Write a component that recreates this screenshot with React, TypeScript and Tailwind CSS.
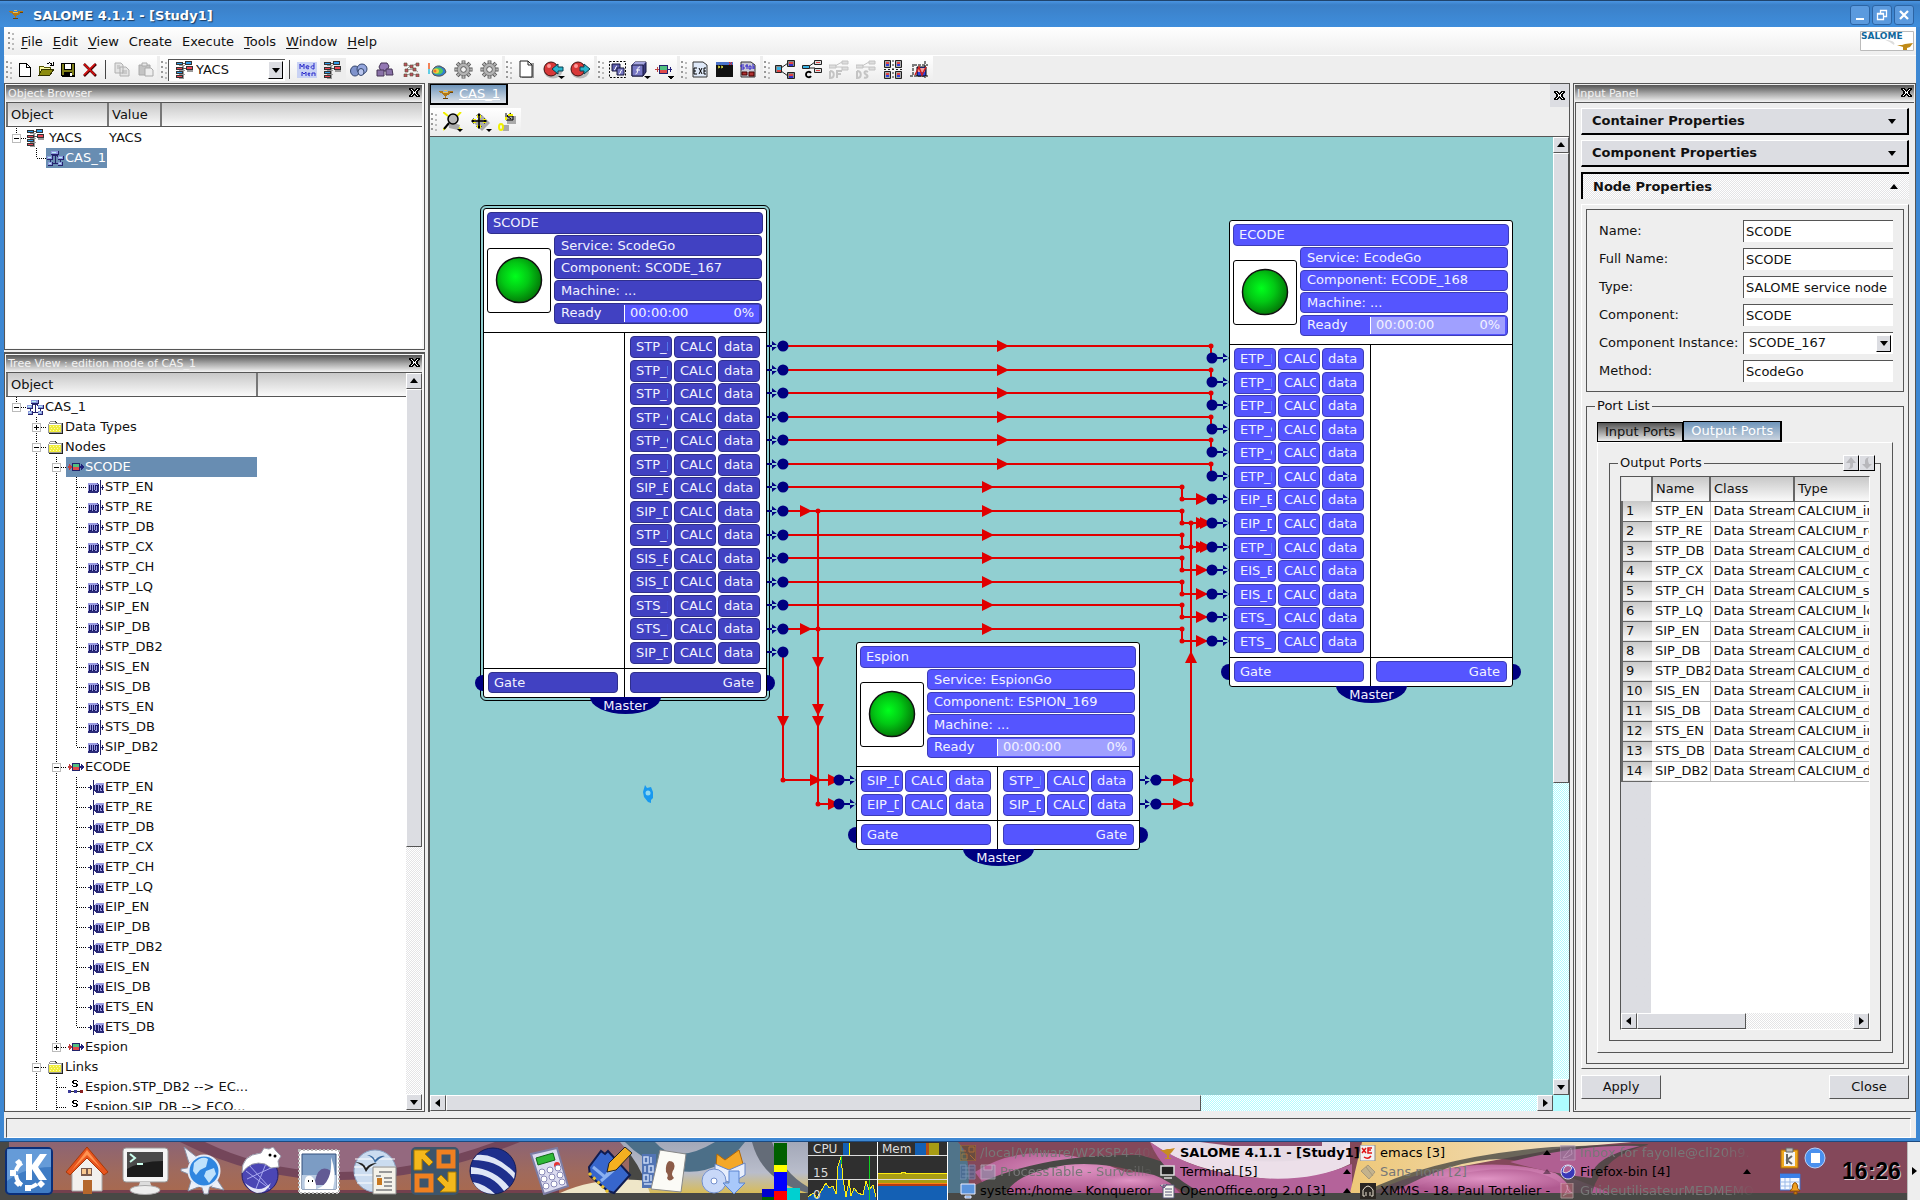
import React from "react";

type Kids = { children?: React.ReactNode };

/* ---------- small drawings ---------- */

const Lamp = () => (
  <svg width="16" height="12" viewBox="0 0 16 12" shapeRendering="crispEdges">
    <path d="M1 3h3l2 1h3l1-1h5v1l-3 1-2 2-2 1v2h2v1H5v-1h2V8L5 7 3 5 1 4z" fill="#b07818" />
    <path d="M6 2h3v1H6zM4 4h6v1H5z" fill="#f0c050" />
    <path d="M12 4h3v1h-3zM5 10h5v1H5z" fill="#6b4208" />
  </svg>
);

const YacsIcon = () => (
  <svg width="18" height="18" viewBox="0 0 18 18" shapeRendering="crispEdges">
    <path d="M3 4h6v1H3zM3 9h6v1H3zM3 13h6v1H3zM6 5h2v12H6zM11 9h6v2h-6zM3 17h5v1H3z" fill="#9a9a9a" />
    <path d="M0 1h7v3H0zM0 6h7v3H0zM0 10h7v3H0zM0 14h7v3H0zM9 0h7v4H9zM10 5h7v4h-7z" fill="#333" />
    <path d="M1 2h5v1H1zM10 1h5v2h-5zM1 11h5v1H1z" fill="#2d9be8" />
    <path d="M1 7h5v1H1zM1 15h5v1H1zM11 6h5v2h-5z" fill="#ee4455" />
    <path d="M7 2h2v1H7zM7 7h3v1H7z" fill="#555" />
  </svg>
);

const SchemaIcon = () => (
  <svg width="17" height="15" viewBox="0 0 17 15" shapeRendering="crispEdges">
    <path d="M8 4v8M3 6l5-2M13 6L8 4M3 9v3M13 9v3M5 12h7" stroke="#23236b" strokeWidth="1" fill="none" />
    <path d="M4 0h8v4H4zM0 5h6v4H0zM11 5h6v4h-6zM1 11h5v4H1zM11 11h5v4h-5z" fill="#23236b" />
    <path d="M4 0h7v3H4zM0 5h5v3H0zM11 5h5v3h-5zM1 11h4v3H1zM11 11h4v3h-4z" fill="#8f9be0" />
    <path d="M5 1h4v1H5zM1 6h3v1H1zM12 6h3v1h-3zM2 12h2v1H2zM12 12h2v1h-2z" fill="#b4f0f4" />
  </svg>
);

const FolderIcon = () => (
  <svg width="16" height="13" viewBox="0 0 16 13" shapeRendering="crispEdges">
    <path d="M1 3h1V1h1V0h5v1h1v1h6v11H1z" fill="#222" />
    <path d="M0 3h1V1h1V0h5v1h1v1h6v10H0z" fill="#999" />
    <path d="M1 4h12v7H1z" fill="#f1ee3a" />
    <path d="M2 5h1v1H2zM5 5h1v1H5zM8 5h1v1H8zM11 5h1v1h-1zM3 7h1v1H3zM6 7h1v1H6zM9 7h1v1H9zM2 9h1v1H2zM5 9h1v1H5zM8 9h1v1H8zM11 9h1v1h-1z" fill="#fffbb0" />
    <path d="M1 3h12v1H1zM2 1h5v1H2z" fill="#fff" />
  </svg>
);

const NodeIcon = () => (
  <svg width="16" height="8" viewBox="0 0 16 8" shapeRendering="crispEdges">
    <path d="M0 3h4v2H0zM1 1h1v6H1zM2 2h1v4H2z" fill="#c04040" />
    <path d="M12 3h4v2h-4zM13 1h1v6h-1zM14 2h1v4h-1z" fill="#20207a" />
    <path d="M4 0h8v8H4z" fill="#23236b" />
    <path d="M5 1h6v3H5z" fill="#4fc080" />
    <path d="M5 4h6v3H5z" fill="#e04a4a" />
  </svg>
);

const OutIcon = () => (
  <svg width="16" height="15" viewBox="0 0 16 15" shapeRendering="crispEdges">
    <path d="M0 3h9l2 2v6l-2 2H0z" fill="#2a2a78" />
    <path d="M0 3h9l1 2v5l-1 1H0z" fill="#9a9ae0" />
    <path d="M1 5h1v6H1zM3 5h1v6H3zM1 10h2v1H1zM5 5h1v5H5zM7 5h1v5H7zM5 10h2v1H5zM8 5h3v1H8zM9 6h1v5H9z" fill="#1a1a66" />
    <path d="M12 0h1v15h-1zM13 7h3v1h-3zM14 5h1v5h-1z" fill="#20206a" />
  </svg>
);

const InIcon = () => (
  <svg width="16" height="15" viewBox="0 0 16 15" shapeRendering="crispEdges">
    <path d="M8 3h8v10H8l-2-2V5z" fill="#2a2a78" />
    <path d="M8 3h8v8H8l-1-1V5z" fill="#9a9ae0" />
    <path d="M8 5h2v6H8zM11 5h1v6h-1zM12 6h1v2h-1zM13 8h1v2h-1zM14 5h1v6h-1z" fill="#1a1a66" />
    <path d="M5 0h1v15H5zM0 7h4v1H0zM2 5h1v5H2zM3 6h1v3H3z" fill="#20206a" />
  </svg>
);

const LinkIcon = () => (
  <svg width="16" height="14" viewBox="0 0 16 14" shapeRendering="crispEdges">
    <path d="M5 0h4v1H5zM4 1h2v2H4zM9 1h1v1H9zM5 3h4v1H5zM8 4h2v2H8zM4 5h1v1H4zM5 6h4v1H5z" fill="#000" />
    <path d="M2 11h12v1H2z" fill="#222" />
    <path d="M0 10h3v3H0zM6 10h3v3H6z" fill="#3a3a9a" />
    <path d="M12 10h3v3h-3z" fill="#8a2020" />
  </svg>
);

const CloseX = () => (
  <svg width="11" height="9" viewBox="0 0 11 9" shapeRendering="crispEdges">
    <path d="M0 0h4l1 2h1l1-2h4v1l-2 3v1l2 3v1H7L6 7H5L4 9H0V8l2-3V4L0 1z" fill="#000" />
    <path d="M2 1h1l2 3h1l2-3h1L7 4v1l2 3H8L6 5H5L3 8H2l2-3V4z" fill="#fff" />
  </svg>
);

const Tri = ({ dir }: { dir: "up" | "down" | "left" | "right" }) => {
  const d = {
    up: "M4 1l4 5H0z",
    down: "M0 2h8L4 7z",
    left: "M6 0v8L1 4z",
    right: "M2 0v8l5-4z",
  }[dir];
  return (
    <svg width="8" height="8" viewBox="0 0 8 8">
      <path d={d} fill="#000" />
    </svg>
  );
};

const Gear = () => (
  <svg width="19" height="19" viewBox="0 0 20 20">
    <g stroke="#555" strokeWidth="4">
      <path d="M10 .5v19M.5 10h19M3.300 3.300l13.400 13.400M16.700 3.300L3.300 16.700" />
    </g>
    <g stroke="#b4b4b4" strokeWidth="2.200">
      <path d="M10 1v18M1 10h18M3.600 3.600l12.800 12.800M16.400 3.600L3.600 16.400" />
    </g>
    <circle cx="10" cy="10" r="6.500" fill="#b4b4b4" stroke="#666" strokeWidth=".7" />
    <circle cx="10" cy="10" r="3" fill="#f0f0f0" stroke="#555" />
  </svg>
);

const Page = () => (
  <svg width="16" height="19" viewBox="0 0 16 19">
    <path d="M3 3h12v15H3z" fill="#999" />
    <path d="M1 1h8l4 4v12H1z" fill="#fff" stroke="#222" />
    <path d="M9 1v4h4" fill="none" stroke="#222" />
  </svg>
);

const Ball = ({ right }: { right?: boolean }) => (
  <svg width="22" height="19" viewBox="0 0 22 19">
    <ellipse cx="10" cy="12" rx="9" ry="6.500" fill="#b9b9b9" />
    <circle cx="8" cy="9" r="7" fill="#d83838" stroke="#401010" />
    <circle cx="6" cy="6" r="2" fill="#ff9a9a" />
    {right ? (
      <path d="M10 7h4V4l6 5-6 5v-3h-4z" fill="#28b4cc" stroke="#0a4050" />
    ) : (
      <path d="M20 7h-5V4L9 9l6 5v-3h5z" fill="#28b4cc" stroke="#0a4050" />
    )}
    {!right && <path d="M15 16h7l-3.500 3z" fill="#000" />}
  </svg>
);

const Cube = () => (
  <svg width="20" height="18" viewBox="0 0 20 18">
    <path d="M1 4l3-3h11v10l-3 4H1z" fill="#3a3a7c" stroke="#14143c" />
    <path d="M1 4l3-3h11l-3 3z" fill="#a8a8e0" />
    <path d="M1 4h11v11H1z" fill="#7878c4" stroke="#14143c" />
    <path d="M9 6c-2-.5-2 1-2.400 3.500S6 13 4.500 13M5 9h4" stroke="#fff" fill="none" />
    <path d="M13 15h7l-3.500 3z" fill="#000" />
  </svg>
);

const Graph = () => (
  <svg width="20" height="19" viewBox="0 0 20 19">
    <path d="M6 8l7-5M6 11l7 5" stroke="#222" fill="none" />
    <path d="M.5 5.500h6v7h-6zM12.500.500h7v6h-7zM12.500 12.500h7v6h-7z" fill="#888" stroke="#222" />
    <path d="M2 7h4v3H2z" fill="#38b0e0" />
    <path d="M14 2h4v2h-4zM2 10h4v2H2zM14 14h4v2h-4z" fill="#e04444" />
    <path d="M14 4h4v2h-4zM14 16h4v2h-4z" fill="#3333cc" />
  </svg>
);

const GraphWithC = () => (
  <svg width="20" height="19" viewBox="0 0 20 19">
    <path d="M6 7l7-5M7 8h6" stroke="#222" fill="none" />
    <path d="M.5 5.500h7v3h-7zM12.500.500h7v4h-7zM12.500 8.500h7v4h-7z" fill="#ddd" stroke="#222" />
    <path d="M1 6h6v2H1z" fill="#38b0e0" />
    <path d="M14 2h4v1h-4zM14 10h4v1h-4z" fill="#e04444" />
    <path d="M9 13c-1-2-5-1.500-5 1.500S8 18 9 16" stroke="#000" strokeWidth="1.800" fill="none" />
  </svg>
);

const GreyGraph = ({ s }: { s?: boolean }) => (
  <svg width="20" height="19" viewBox="0 0 20 19">
    <path d="M6 6l7-4M7 7h6M0 5h7v3H0zM13 1h6v3h-6zM13 7h6v3h-6z" stroke="#c4c4c4" fill="#ddd" />
    <path d="M1 11v7c5 0 5-7 0-7" stroke="#c4c4c4" strokeWidth="2" fill="none" />
    {s ? (
      <path d="M12 12c-3-2-5 1-2 2.500s1 4-2 3" stroke="#c4c4c4" strokeWidth="2" fill="none" />
    ) : (
      <path d="M8 18v-7h5M8 14h4" stroke="#c4c4c4" strokeWidth="2" fill="none" />
    )}
  </svg>
);

/* ---------- toolbar parts ---------- */

const Handle = () => (
  <span className="mx-px flex h-[18px] w-[6px] shrink-0 flex-col justify-between">
    {[0, 1, 2, 3].map((i) => (
      <span key={i} className="flex h-[3px] justify-between">
        <i className="h-[2px] w-[2px] bg-[#999]" />
        <i className="mt-px h-[2px] w-[2px] bg-[#bbb]" />
      </span>
    ))}
  </span>
);

const Group = ({ children }: Kids) => (
  <div className="mr-[3px] flex h-[27px] items-center bg-linear-to-b from-white to-[#ececec]">{children}</div>
);

const Tool = ({ label, w = "w-[26px]", on, children }: Kids & { label: string; w?: string; on?: boolean }) => (
  <button
    aria-label={label}
    title={label}
    className={`flex h-[24px] shrink-0 items-center justify-center ${w} ${on ? "bg-[#ededed]" : ""}`}
  >
    {children}
  </button>
);

const Sep = () => <span className="mx-[4px] h-[19px] w-px shrink-0 bg-[#444]" />;

const MainToolbar = () => (
  <div className="flex h-[28px] items-start border-t border-white bg-[#eee] pl-px">
    <Group>
      <Handle />
      <Tool label="New" w="w-[22px]">
        <svg width="13" height="15" viewBox="0 0 13 15" shapeRendering="crispEdges">
          <path d="M1 1h7l4 4v9H1z" fill="#fff" stroke="#000" />
          <path d="M8 1v4h4" fill="none" stroke="#000" />
        </svg>
      </Tool>
      <Tool label="Open" w="w-[22px]">
        <svg width="17" height="15" viewBox="0 0 17 15" shapeRendering="crispEdges">
          <path d="M1 13V4h4l1 1h6v3" fill="#f8f8a0" stroke="#555500" />
          <path d="M1 13l3-6h12l-4 6z" fill="#8c8c10" stroke="#333300" />
          <path d="M9 2c2-2 4-1 5 1M12 3h3V0" stroke="#000" fill="none" />
        </svg>
      </Tool>
      <Tool label="Save" w="w-[22px]">
        <svg width="14" height="14" viewBox="0 0 14 14" shapeRendering="crispEdges">
          <path d="M0 0h14v14H1l-1-1z" fill="#000" />
          <path d="M1 1h2v6h8V1h2v11H1z" fill="#80801a" />
          <path d="M4 1h6v5H4z" fill="#fff" />
          <path d="M3 9h8v5H3z" fill="#000" />
          <path d="M9 10h2v3H9z" fill="#fff" />
        </svg>
      </Tool>
      <Tool label="Delete" w="w-[22px]">
        <svg width="14" height="14" viewBox="0 0 14 14">
          <path d="M1 1l12 12M13 1L1 13" stroke="#400" strokeWidth="2.500" />
          <path d="M1 1l11 11M12 1L1 12" stroke="#d81010" strokeWidth="1.700" />
        </svg>
      </Tool>
      <Sep />
      <Tool label="Copy" w="w-[24px]">
        <svg width="16" height="15" viewBox="0 0 16 15">
          <path d="M1 1h6l2 2v8H1zM6 5h6l3 3v6H6z" fill="#e4e4e4" stroke="#b0b0b0" />
          <path d="M3 4h3M3 6h3M8 9h5M8 11h5" stroke="#b0b0b0" />
        </svg>
      </Tool>
      <Tool label="Paste" w="w-[23px]">
        <svg width="16" height="15" viewBox="0 0 16 15">
          <path d="M1 3h11v10H1z" fill="#c4c4c4" stroke="#aaa" />
          <path d="M4 1h5v3H4z" fill="#e8e8e8" stroke="#aaa" />
          <path d="M7 6h6l2 2v6H7z" fill="#eee" stroke="#aaa" />
        </svg>
      </Tool>
    </Group>
    <Group>
      <Handle />
      <div className="relative flex h-[22px] w-[117px] items-center border-t border-l border-[#555] bg-white">
        <span className="pointer-events-none absolute left-[7px]">
          <YacsIcon />
        </span>
        <select aria-label="Module" className="h-full w-full appearance-none bg-transparent pl-[27px] text-[13px]">
          <option>YACS</option>
        </select>
        <span className="pointer-events-none absolute right-[2px] flex h-[18px] w-[15px] items-center justify-center border border-t-white border-r-black border-b-black border-l-white bg-[#dcdde2]">
          <Tri dir="down" />
        </span>
      </div>
      <Sep />
      <Tool label="MedMem">
        <svg width="20" height="16" viewBox="0 0 20 16">
          <path d="M0 0h20v16H0z" fill="#c9d2f4" />
          <path d="M3 7V2l2 3 2-3v5M9 5h3c0-2-3-2-3 0s2 2 3 1.500M17 1v6c-4 0-4-4 0-3" stroke="#2a2acb" fill="none" />
          <path d="M5 14v-4l2 2 2-2v4M11 12h2c0-1.500-2-1.500-2 0s1 2 2 1.500M15 14v-3h3v3" stroke="#2a2acb" fill="none" />
        </svg>
      </Tool>
      <Tool label="YACS" on>
        <YacsIcon />
      </Tool>
      <Tool label="Post">
        <svg width="18" height="14" viewBox="0 0 18 14">
          <ellipse cx="5" cy="8" rx="4.500" ry="5" fill="#7f93cc" stroke="#34466e" />
          <ellipse cx="12" cy="6" rx="5" ry="5" fill="#94a6dd" stroke="#34466e" />
          <ellipse cx="11" cy="9" rx="3" ry="3.500" fill="#b9c6ee" stroke="#34466e" />
        </svg>
      </Tool>
      <Tool label="Geometry">
        <svg width="18" height="15" viewBox="0 0 18 15">
          <path d="M5 1h6l2 3-2 5H5L3 5z" fill="#9478b4" stroke="#443355" />
          <path d="M1 8h7v6H1zM10 7h6l1 6h-7z" fill="#8a72a8" stroke="#443355" />
        </svg>
      </Tool>
      <Tool label="Mesh">
        <svg width="17" height="15" viewBox="0 0 17 15">
          <path d="M2 2l5 2 7-2M3 8l8-1 4 3M2 13l6-1 6 1M7 4L3 8" stroke="#999" fill="none" />
          <path d="M1 1h3v3H1zM7 3h3v3H7zM13 1h3v3h-3zM2 7h3v3H2zM10 6h3v3h-3zM1 12h3v3H1zM7 11h3v3H7zM13 12h3v3h-3z" fill="#c05060" stroke="#553" strokeWidth=".6" />
        </svg>
      </Tool>
      <Tool label="Visualisation">
        <svg width="19" height="14" viewBox="0 0 19 14">
          <path d="M1 0v6" stroke="#f05a20" strokeWidth="1.500" />
          <path d="M1 6v5" stroke="#30c0e0" strokeWidth="1.500" />
          <path d="M4 9q2-7 8-6 6 2 6 6-3 5-9 4-4 0-5-4z" fill="#2f7fd0" stroke="#555" />
          <ellipse cx="10" cy="8" rx="5" ry="3.500" fill="#52c860" />
          <ellipse cx="8" cy="8" rx="3" ry="2.500" fill="#f0d040" />
          <ellipse cx="7" cy="8" rx="1.500" ry="1.500" fill="#f07030" />
        </svg>
      </Tool>
      <Tool label="Supervisor">
        <Gear />
      </Tool>
      <Tool label="Supervision">
        <Gear />
      </Tool>
    </Group>
    <Group>
      <Handle />
      <Tool label="New schema" w="w-[27px]">
        <Page />
      </Tool>
      <Tool label="Import" w="w-[27px]">
        <Ball />
      </Tool>
      <Tool label="Export" w="w-[27px]">
        <Ball right />
      </Tool>
    </Group>
    <Group>
      <Handle />
      <Tool label="Container" w="w-[24px]">
        <svg width="17" height="17" viewBox="0 0 17 17">
          <path d="M.5.5h16v16H.5z" fill="none" stroke="#000" strokeDasharray="2 1.500" />
          <path d="M3 3h8v7H3z" fill="#5c5cac" stroke="#14143c" />
          <path d="M8 7h7v7H8z" fill="#7878c4" stroke="#14143c" />
          <path d="M8 5c-2 0-1 4-3 4M13 9c-2 0-1 4-3 4" stroke="#fff" fill="none" />
        </svg>
      </Tool>
      <Tool label="Function" w="w-[24px]">
        <Cube />
      </Tool>
      <Tool label="Service" w="w-[24px]">
        <svg width="20" height="18" viewBox="0 0 20 18" shapeRendering="crispEdges">
          <path d="M0 8h4v1H0zM2 6h1v5H2z" fill="#c04040" />
          <path d="M4 4h9v9H4z" fill="#23236b" />
          <path d="M5 5h7v4H5z" fill="#4fc080" />
          <path d="M5 9h7v3H5z" fill="#e04a4a" />
          <path d="M13 8h4v1h-4zM15 6h1v5h-1z" fill="#20207a" />
          <path d="M12 15h7l-3 3h-1z" fill="#000" />
        </svg>
      </Tool>
    </Group>
    <Group>
      <Handle />
      <Tool label="Execute" w="w-[24px]">
        <svg width="16" height="17" viewBox="0 0 16 17">
          <path d="M1 1h10l4 3v12H1z" fill="#dfe9f8" stroke="#333" />
          <path d="M2 7v6M2 7h3M2 10h2M2 13h3M7 7l3 6M10 7l-3 6M14 7h-2v6h2M12 10h2" stroke="#000" fill="none" />
        </svg>
      </Tool>
      <Tool label="Console" w="w-[24px]">
        <svg width="17" height="15" viewBox="0 0 17 15">
          <path d="M0 0h17v15H0z" fill="#111" />
          <path d="M0 0h17v3H0z" fill="#4a72c8" />
          <path d="M13 0l3 3M16 0l-3 3" stroke="#e02020" />
          <path d="M2 4l2 1-2 1M5 4l2 1-2 1" stroke="#ee4" fill="none" />
        </svg>
      </Tool>
      <Tool label="State" w="w-[24px]">
        <svg width="16" height="17" viewBox="0 0 16 17">
          <path d="M1 1h10l4 3v12H1z" fill="#c9c9d4" stroke="#333" />
          <path d="M4 4H1v2h3v2H1M7 3v5M5 5h3M11 5v3H9V5zM13 3v5M14 5v3" stroke="#3322cc" fill="none" />
          <path d="M2 11h5v3H2zM9 11h5v4H9z" fill="#b03030" stroke="#400" />
        </svg>
      </Tool>
    </Group>
    <Group>
      <Handle />
      <Tool label="Full view" w="w-[27px]">
        <Graph />
      </Tool>
      <Tool label="Control view" w="w-[27px]">
        <GraphWithC />
      </Tool>
      <Tool label="Dataflow view" w="w-[27px]">
        <GreyGraph />
      </Tool>
      <Tool label="Datastream view" w="w-[27px]">
        <GreyGraph s />
      </Tool>
      <Tool label="Arrange nodes" w="w-[27px]">
        <svg width="18" height="19" viewBox="0 0 18 19">
          <path d="M.5.5h6v7h-6zM11.500.500h6v7h-6zM.5 11.500h6v7h-6zM11.500 11.500h6v7h-6z" fill="#aaa" stroke="#222" />
          <path d="M2 4h3v2H2zM13 4h3v2h-3zM2 15h3v2H2zM13 15h3v2h-3z" fill="#3344dd" />
          <path d="M2 2h3v2H2zM13 2h3v2h-3zM13 13h3v2h-3zM2 13h3v2H2z" fill="#e04444" />
          <path d="M9 0v19M0 9.500h18" stroke="#222" strokeDasharray="2 2" />
        </svg>
      </Tool>
      <Tool label="Rebuild links" w="w-[27px]">
        <svg width="19" height="18" viewBox="0 0 19 18">
          <path d="M4 4h14M3 3v11M0 15h18M15 0v17" stroke="#000" strokeDasharray="3 1" fill="none" />
          <path d="M7 6h9v9H7z" fill="#3344dd" stroke="#000" />
          <path d="M8 7h7v4H8z" fill="#f0a0a0" />
          <path d="M5 14l4-8 3 8 4-8" stroke="#d02020" strokeWidth="1.500" fill="none" />
        </svg>
      </Tool>
    </Group>
  </div>
);

/* ---------- dock parts ---------- */

const DockTitle = ({ children }: Kids) => (
  <div className="flex h-[17px] shrink-0 items-center justify-between bg-linear-to-b from-[#555] via-[#a8a8a8] to-[#f4f4f4] pr-[2px] pl-[2px] text-[11px] text-[#f2f2f2]">
    <span>{children}</span>
    <button aria-label="Close panel" className="mb-[2px]">
      <CloseX />
    </button>
  </div>
);

const HeaderCell = ({ w, children }: Kids & { w: string }) => (
  <div
    className={`flex h-[23px] items-center border-l-2 border-[#777] bg-linear-to-b from-[#c8c8c8] to-[#fafafa] pl-[3px] ${w}`}
  >
    {children}
  </div>
);

const VDots = "bg-[repeating-linear-gradient(to_bottom,#000_0_1px,transparent_1px_2px)]";
const HDots = "bg-[repeating-linear-gradient(to_right,#000_0_1px,transparent_1px_2px)]";

/* Guide cells: | line, T tee, L elbow, + and - toggles, p and m toggles that end a branch, o empty. */
const Guide = ({ c }: { c: string }) => {
  if (c === "o") return <span className="w-[20px] shrink-0" />;
  const toggle = "+-pm".includes(c);
  const down = "|T+-".includes(c);
  return (
    <span className="grid h-[20px] w-[20px] shrink-0 grid-cols-[11px_9px] grid-rows-[10px_10px]">
      <span className={`col-start-1 row-start-1 ml-auto w-px ${VDots}`} />
      <span className={`col-start-1 row-start-2 ml-auto w-px ${down ? VDots : ""}`} />
      {c !== "|" && <span className={`col-start-2 row-start-2 h-px ${HDots}`} />}
      {toggle && (
        <span className="z-10 col-span-2 col-start-1 row-span-2 row-start-1 ml-[6px] flex h-[9px] w-[9px] items-center justify-center self-center border border-[#bbb] bg-white">
          <svg width="5" height="5" viewBox="0 0 5 5" shapeRendering="crispEdges">
            <path d={c === "+" || c === "p" ? "M0 2h5v1H0zM2 0h1v5H2z" : "M0 2h5v1H0z"} fill="#000" />
          </svg>
        </span>
      )}
    </span>
  );
};

const TreeRow = ({ guides, icon, selected, children }: Kids & { guides: string; icon: React.ReactNode; selected?: boolean }) => (
  <div className="flex h-[20px] shrink-0 items-center" role="treeitem" aria-selected={!!selected}>
    {guides.split("").map((c, i) => (
      <Guide key={i} c={c} />
    ))}
    <span
      className={`flex h-[20px] flex-1 items-center whitespace-nowrap ${selected ? "bg-[#688db2] text-white" : ""}`}
    >
      <span className="flex w-[19px] shrink-0 justify-center">{icon}</span>
      {children}
    </span>
  </div>
);

const ScrollBtn = ({ dir }: { dir: "up" | "down" | "left" | "right" }) => (
  <button
    aria-label={`Scroll ${dir}`}
    className="flex h-[16px] w-[16px] shrink-0 items-center justify-center border border-t-white border-r-[#555] border-b-[#555] border-l-white bg-[#dcdde2]"
  >
    <Tri dir={dir} />
  </button>
);

const Thumb = ({ size }: { size: string }) => (
  <span className={`border border-t-white border-r-[#555] border-b-[#555] border-l-white bg-[#dcdde2] ${size}`} />
);

const dither = "bg-[length:2px_2px] bg-[conic-gradient(#fff_25%,#e4e4e6_0_50%,#fff_0_75%,#e4e4e6_0)]";
const cyanDither = "bg-[length:2px_2px] bg-[conic-gradient(#fff_25%,#b0fbff_0_50%,#fff_0_75%,#b0fbff_0)]";

const outPorts = [
  "STP_EN", "STP_RE", "STP_DB", "STP_CX", "STP_CH", "STP_LQ", "SIP_EN", "SIP_DB",
  "STP_DB2", "SIS_EN", "SIS_DB", "STS_EN", "STS_DB", "SIP_DB2",
];
const inPorts = [
  "ETP_EN", "ETP_RE", "ETP_DB", "ETP_CX", "ETP_CH", "ETP_LQ", "EIP_EN", "EIP_DB",
  "ETP_DB2", "EIS_EN", "EIS_DB", "ETS_EN", "ETS_DB",
];
const portTypes = [
  "integer", "real", "double", "complex", "string", "logical", "integer", "double",
  "double", "integer", "double", "integer", "double", "double",
];

const LeftDock = () => (
  <aside className="flex w-[421px] shrink-0 flex-col">
    <section className="flex h-[267px] shrink-0 flex-col border border-[#555] bg-[#f8f8f8] p-px pr-[2px]">
      <DockTitle>Object Browser</DockTitle>
      <div className="flex min-h-0 flex-1 flex-col bg-white">
        <div className="flex border-y border-[#555] bg-linear-to-b from-[#c8c8c8] to-[#fafafa]">
          <HeaderCell w="w-[101px]">Object</HeaderCell>
          <HeaderCell w="w-[53px]">Value</HeaderCell>
          <HeaderCell w="flex-1" />
        </div>
        <div className="flex flex-col pt-px" role="tree" aria-label="Objects">
          <div className="flex h-[20px] items-center">
            <div className="w-[103px]">
              <TreeRow guides="m" icon={<YacsIcon />}>
                <span className="pl-[4px]">YACS</span>
              </TreeRow>
            </div>
            YACS
          </div>
          <div className="w-[101px]">
            <TreeRow guides="oL" icon={<SchemaIcon />} selected>
              CAS_1
            </TreeRow>
          </div>
        </div>
      </div>
    </section>
    <section className="mt-[2px] flex min-h-0 flex-1 flex-col border border-t-2 border-[#555] bg-[#f8f8f8] p-px pr-[2px]">
      <DockTitle>Tree View : edition mode of CAS_1</DockTitle>
      <div className="flex min-h-0 flex-1 border-t border-[#555] bg-white">
        <div className="flex min-w-0 flex-1 flex-col">
          <div className="flex shrink-0 border-b border-[#555]">
            <HeaderCell w="w-[250px]">Object</HeaderCell>
            <HeaderCell w="flex-1" />
          </div>
          <div className="flex min-h-0 w-[251px] flex-1 flex-col overflow-hidden" role="tree" aria-label="Schema">
            <TreeRow guides="m" icon={<SchemaIcon />}>CAS_1</TreeRow>
            <TreeRow guides="o+" icon={<FolderIcon />}>Data Types</TreeRow>
            <TreeRow guides="o-" icon={<FolderIcon />}>Nodes</TreeRow>
            <TreeRow guides="o|-" icon={<NodeIcon />} selected>SCODE</TreeRow>
            {outPorts.map((p, i) => (
              <TreeRow key={p} guides={i === outPorts.length - 1 ? "o||L" : "o||T"} icon={<OutIcon />}>{p}</TreeRow>
            ))}
            <TreeRow guides="o|-" icon={<NodeIcon />}>ECODE</TreeRow>
            {inPorts.map((p, i) => (
              <TreeRow key={p} guides={i === inPorts.length - 1 ? "o||L" : "o||T"} icon={<InIcon />}>{p}</TreeRow>
            ))}
            <TreeRow guides="o|p" icon={<NodeIcon />}>Espion</TreeRow>
            <TreeRow guides="o-" icon={<FolderIcon />}>Links</TreeRow>
            <TreeRow guides="o|T" icon={<LinkIcon />}>Espion.STP_DB2 --&gt; EC...</TreeRow>
            <TreeRow guides="o|T" icon={<LinkIcon />}>Espion.SIP_DB --&gt; ECO...</TreeRow>
          </div>
        </div>
        <div className={`flex w-[16px] flex-col ${dither}`}>
          <ScrollBtn dir="up" />
          <Thumb size="h-[458px]" />
          <span className="flex-1" />
          <ScrollBtn dir="down" />
        </div>
      </div>
    </section>
  </aside>
);

/* ---------- schema nodes ---------- */

type NodeProps = {
  name: string;
  service: string;
  component: string;
  place: string;
  portsHeight: string;
  left: string[];
  right: string[];
  selected?: boolean;
};

const LampBox = () => (
  <span className="mt-[13px] flex h-[65px] w-[64px] shrink-0 items-center justify-center rounded-[3px] border border-black">
    <svg width="48" height="50" viewBox="0 0 48 50">
      <defs>
        <radialGradient id="led" cx="42%" cy="42%" r="60%">
          <stop offset="0" stopColor="#00ff1c" />
          <stop offset=".5" stopColor="#02c814" />
          <stop offset="1" stopColor="#037808" />
        </radialGradient>
      </defs>
      <circle cx="24" cy="24" r="22.500" fill="url(#led)" stroke="#111" strokeWidth="1.500" />
    </svg>
  </span>
);

const SchemaNode = ({ name, service, component, place, portsHeight, left, right, selected }: NodeProps) => {
  const pill = selected ? "bg-[#4141c2] border-[#2f2f8c]" : "bg-[#5555ff] border-[#3d3db8]";
  const bar = selected ? "bg-[#5555ff]" : "bg-[#a0a0ff]";
  const Pill = ({ children, cls }: Kids & { cls: string }) => (
    <span className={`flex items-center rounded-[4px] border ${pill} ${cls}`}>{children}</span>
  );
  const port = (label: string, i: number) => (
    <span key={i} className="flex gap-[2px]">
      {[label, "CALC", "data"].map((t) => (
        <span key={t} className={`flex h-[22px] w-[42px] items-center rounded-[4px] border pr-[3px] pl-[5px] ${pill}`}>
          <span className="w-full overflow-hidden whitespace-nowrap">{t}</span>
        </span>
      ))}
    </span>
  );
  return (
    <article
      className={`absolute flex w-[284px] flex-col rounded-[3px] border border-black bg-white text-[#f2f2ff] ${place} ${
        selected ? "outline outline-1 outline-offset-[2px] outline-black" : ""
      }`}
    >
      <div className="flex h-[123px] flex-col px-[3px] pt-[3px]">
        <Pill cls="h-[22px] pl-[5px]">{name}</Pill>
        <div className="mt-px flex gap-[3px]">
          <LampBox />
          <div className="flex h-[89px] flex-1 flex-col justify-between pr-px">
            <Pill cls="h-[21px] pl-[6px]">Service: {service}</Pill>
            <Pill cls="h-[21px] pl-[6px]">Component: {component}</Pill>
            <Pill cls="h-[21px] pl-[6px]">Machine: ...</Pill>
            <Pill cls="h-[21px] pl-[6px]">
              <span className="w-[63px]">Ready</span>
              <span className={`mr-[2px] flex h-[17px] flex-1 items-center justify-between border-l border-white px-[5px] ${bar}`}>
                <span>00:00:00</span>
                <span>0%</span>
              </span>
            </Pill>
          </div>
        </div>
      </div>
      <div className={`flex border-t border-black ${portsHeight}`}>
        <div className="flex w-[140px] flex-col justify-between pt-[3px] pb-[4px] pl-[4px]">{left.map(port)}</div>
        <div className="flex flex-1 flex-col justify-between border-l border-black pt-[3px] pb-[4px] pl-[5px]">
          {right.map(port)}
        </div>
      </div>
      <div className="flex h-[29px] border-t border-black">
        <div className="w-[140px] pt-[3px] pr-[6px] pl-[4px]">
          <Pill cls="h-[21px] pl-[5px]">Gate</Pill>
        </div>
        <div className="flex-1 border-l border-black pt-[3px] pr-[5px] pl-[5px]">
          <Pill cls="h-[21px] justify-end pr-[6px]">Gate</Pill>
        </div>
      </div>
      <span className="absolute bottom-[6px] -left-[9px] h-[16px] w-[8px] rounded-l-full bg-[#000080]" />
      <span className="absolute -right-[9px] bottom-[6px] h-[16px] w-[8px] rounded-r-full bg-[#000080]" />
      <span className="absolute top-full left-[106px] flex h-[17px] w-[71px] items-center justify-center rounded-[0_0_50%_50%/0_0_100%_100%] bg-[#000080]">
        Master
      </span>
    </article>
  );
};

const RED = "#e00000";
const NAVY = "#000080";
const sy = (n: number) => Math.round(346 + 23.57 * n);
const ey = (n: number) => Math.round(358 + 23.57 * n);

const Arrow = ({ x, y, dir = "r" }: { x: number; y: number; dir?: "r" | "d" | "u" }) => {
  const d = {
    r: `M${x} ${y - 6}v12l12-6z`,
    d: `M${x - 6} ${y}h12l-6 12z`,
    u: `M${x - 6} ${y}h12l-6-12z`,
  }[dir];
  return <path d={d} fill={RED} />;
};

const OutDot = ({ x, y }: { x: number; y: number }) => (
  <g fill={NAVY}>
    <path d={`M${x - 16} ${y - 1}h14v2h-14zM${x - 11} ${y - 5}v10l6-5z`} />
    <circle cx={x} cy={y} r="5.500" />
  </g>
);

const InDot = ({ x, y }: { x: number; y: number }) => (
  <g fill={NAVY}>
    <path d={`M${x} ${y - 1}h16v2h-16zM${x + 11} ${y - 5}v10l6-5z`} />
    <circle cx={x} cy={y} r="5.500" />
  </g>
);

const Links = () => (
  <svg className="absolute inset-0 h-full w-full" aria-label="Links">
    <g transform="translate(-430 -137)">
      <g stroke={RED} strokeWidth="2" fill="none">
        {inPorts.map((p, n) => (
          <path key={p} d={n < 6 ? `M783 ${sy(n)}H1211V${ey(n)}` : `M783 ${sy(n)}H1182V${ey(n)}H1212`} />
        ))}
        <path d={`M783 ${sy(13)}V780H839`} />
        <path d={`M818 ${sy(7)}V804H839`} />
        <path d="M1156 780H1191M1156 804H1191V523H1212" />
      </g>
      <g fill={RED}>
        {inPorts.map((p, n) => (
          <React.Fragment key={p}>
            <circle cx={n < 6 ? 1211 : 1182} cy={sy(n)} r="2.500" />
            {n >= 6 && <circle cx="1182" cy={ey(n)} r="2.500" />}
            <Arrow x={n < 6 ? 997 : 982} y={sy(n)} />
            {n >= 6 && <Arrow x={1196} y={ey(n)} />}
          </React.Fragment>
        ))}
        {[[783, 780], [818, 804], [818, 511], [818, 629], [1191, 780], [1191, 804], [1191, 523], [1191, 547]].map(([x, y]) => (
          <circle key={`${x}-${y}`} cx={x} cy={y} r="2.500" />
        ))}
      </g>
      <Arrow x={1200} y={ey(7)} />
      <Arrow x={1200} y={ey(8)} />
      <Arrow x={800} y={sy(7)} />
      <Arrow x={800} y={sy(12)} />
      <Arrow x={783} y={716} dir="d" />
      <Arrow x={818} y={657} dir="d" />
      <Arrow x={818} y={704} dir="d" />
      <Arrow x={818} y={716} dir="d" />
      <Arrow x={810} y={780} />
      <Arrow x={828} y={780} />
      <Arrow x={828} y={804} />
      <Arrow x={1173} y={780} />
      <Arrow x={1173} y={804} />
      <Arrow x={1191} y={663} dir="u" />
      {outPorts.map((p, n) => (
        <OutDot key={p} x={783} y={sy(n)} />
      ))}
      {inPorts.map((p, n) => (
        <InDot key={p} x={1212} y={ey(n)} />
      ))}
      <InDot x={839} y={780} />
      <InDot x={839} y={804} />
      <OutDot x={1156} y={780} />
      <OutDot x={1156} y={804} />
      <path d="M645 785l2 3 4-1 2 5v6l-2 2v3l-3-1-4-5-1-5z" fill="#1899f0" />
      <circle cx="648" cy="793" r="2.500" fill="#91d8f0" />
    </g>
  </svg>
);

const Workspace = () => (
  <main className="ml-[3px] flex min-w-0 flex-1 flex-col border-t border-r border-l-2 border-t-[#555] border-r-[#555] border-l-[#555]">
    <div className="flex h-[24px] items-start justify-between">
      <button className="flex h-[21px] w-[78px] items-center gap-[5px] border-r-2 border-b-2 border-t border-l border-black bg-linear-to-b from-[#6f95ba] to-[#dfe4ea] pl-[7px] text-white underline">
        <Lamp />
        CAS_1
      </button>
      <button aria-label="Close tab" className="flex h-[23px] w-[19px] items-center justify-center bg-[#dcdde2]">
        <CloseX />
      </button>
    </div>
    <div className="flex h-[28px]">
      <Group>
        <Handle />
        <Tool label="Zoom" w="w-[29px]">
          <svg width="20" height="20" viewBox="0 0 20 20">
            <path d="M0 0l5 4M18 0l-4 4M0 18l3-3M14 14l4 4" stroke="#f0f000" strokeWidth="2" />
            <path d="M5 9l12 4-2 5-9-2z" fill="#aaa" />
            <circle cx="10" cy="7" r="5" fill="#b8b8b8" stroke="#000" strokeWidth="1.500" />
            <path d="M6 11l-5 6" stroke="#000" strokeWidth="2" />
            <path d="M14 17h6l-3 3z" />
          </svg>
        </Tool>
        <Tool label="Pan" w="w-[28px]">
          <svg width="22" height="20" viewBox="0 0 22 20">
            <path d="M12 3l8 8-8 8-8-8z" fill="#aaa" />
            <path d="M9 2v14M2 9h14" stroke="#000" strokeWidth="1.500" />
            <path d="M9 1l3 3H6zM9 17l3-3H6zM1 9l3-3v6zM17 9l-3-3v6z" fill="#000" />
            <path d="M7 3h1v3H7zM10 3h1v3h-1zM3 7h3v1H3zM13 7h3v1h-3zM3 10h3v1H3zM13 10h3v1h-3zM7 13h1v3H7zM10 13h1v3h-1z" fill="#f0f000" />
            <path d="M16 17h6l-3 3z" />
          </svg>
        </Tool>
        <Tool label="Reset view" w="w-[26px]">
          <svg width="20" height="20" viewBox="0 0 20 20">
            <path d="M9 4h9v8H9zM5 13h6v6H5z" fill="#aaa" />
            <path d="M8 1v7h7V4H9M13 1l-4 3 4 3" stroke="#000" fill="none" />
            <path d="M10 2h5v2h-5zM7 5h2v3H7z" fill="#f0f000" />
            <ellipse cx="3" cy="15" rx="2" ry="3" stroke="#f0f000" strokeWidth="2" fill="none" />
          </svg>
        </Tool>
      </Group>
    </div>
    <div className="flex min-h-0 flex-1 border-t border-[#555]">
      <div className="relative min-w-0 flex-1 overflow-hidden bg-[#91cfd1]">
        <SchemaNode name="SCODE" service="ScodeGo" component="SCODE_167" place="left-[53px] top-[71px]" portsHeight="h-[336px]" left={[]} right={outPorts} selected />
        <SchemaNode name="ECODE" service="EcodeGo" component="ECODE_168" place="left-[799px] top-[83px]" portsHeight="h-[313px]" left={inPorts} right={[]} />
        <SchemaNode name="Espion" service="EspionGo" component="ESPION_169" place="left-[426px] top-[505px]" portsHeight="h-[54px]" left={["SIP_DB", "EIP_DB"]} right={["STP_DB2", "SIP_DB"]} />
        <Links />
      </div>
      <div className={`flex w-[16px] flex-col ${cyanDither}`}>
        <ScrollBtn dir="up" />
        <Thumb size="h-[630px]" />
        <span className="flex-1" />
        <ScrollBtn dir="down" />
      </div>
    </div>
    <div className={`mb-px flex h-[16px] shrink-0 ${cyanDither}`}>
      <ScrollBtn dir="left" />
      <Thumb size="w-[755px]" />
      <span className="flex-1" />
      <ScrollBtn dir="right" />
      <span className="w-[16px] bg-[#aefcff]" />
    </div>
  </main>
);

/* ---------- input panel ---------- */

const Accordion = ({ open, children }: Kids & { open?: boolean }) => (
  <button
    aria-expanded={!!open}
    className={`flex h-[27px] items-center justify-between pr-[11px] pl-[10px] font-bold ${
      open
        ? `border-t-2 border-l-2 border-black ${dither}`
        : "border border-t-white border-r-2 border-r-black border-b-2 border-b-black border-l-white bg-[#dcdde2]"
    }`}
  >
    {children}
    <Tri dir={open ? "up" : "down"} />
  </button>
);

const fields = [
  ["Name:", "SCODE"],
  ["Full Name:", "SCODE"],
  ["Type:", "SALOME service node"],
  ["Component:", "SCODE"],
  ["Component Instance:", "SCODE_167"],
  ["Method:", "ScodeGo"],
];

const PortTable = () => (
  <div className="flex min-h-0 flex-1 flex-col border border-t-[#555] border-r-white border-b-white border-l-[#555] bg-white">
    <div className="min-h-0 flex-1 overflow-hidden bg-linear-to-r from-[#dcdde2] from-[30px] to-white to-[30px]">
      <table className="w-full table-fixed border-collapse text-left">
        <colgroup>
          <col className="w-[30px]" />
          <col className="w-[58px]" />
          <col className="w-[84px]" />
          <col />
        </colgroup>
        <thead>
          <tr className="h-[24px]">
            <th className="bg-[#eee]" />
            {["Name", "Class", "Type"].map((h) => (
              <th key={h} className="border-b border-l-2 border-[#666] bg-linear-to-b from-[#c8c8c8] to-[#fafafa] pl-[3px] font-normal">
                {h}
              </th>
            ))}
          </tr>
        </thead>
        <tbody>
          {outPorts.map((p, i) => (
            <tr key={p} className="h-[20px]">
              <th className="border-b border-l-2 border-[#666] bg-linear-to-b from-[#c8c8c8] to-[#fafafa] pl-[3px] font-normal">
                {i + 1}
              </th>
              <td className="overflow-hidden border-r border-b border-[#bbb] bg-white pl-[3px] whitespace-nowrap">{p}</td>
              <td className="overflow-hidden border-r border-b border-[#bbb] bg-white pl-[3px] whitespace-nowrap">Data Stream</td>
              <td className="overflow-hidden border-b border-[#bbb] bg-white pl-[3px] whitespace-nowrap">CALCIUM_{portTypes[i]}</td>
            </tr>
          ))}
        </tbody>
      </table>
    </div>
    <div className={`flex h-[16px] shrink-0 ${dither}`}>
      <ScrollBtn dir="left" />
      <Thumb size="w-[109px]" />
      <span className="flex-1" />
      <ScrollBtn dir="right" />
    </div>
  </div>
);

const UpDown = ({ d, label }: { d: string; label: string }) => (
  <button
    aria-label={label}
    disabled
    className="flex h-[16px] w-[16px] items-center justify-center border border-t-white border-r-black border-b-black border-l-white bg-[#dcdde2]"
  >
    <svg width="12" height="12" viewBox="0 0 12 12">
      <path d={d} fill="#b8b8bc" />
    </svg>
  </button>
);

const InputPanel = () => (
  <aside className="ml-[3px] flex w-[343px] shrink-0 flex-col border border-[#555] p-px pt-px">
    <DockTitle>Input Panel</DockTitle>
    <div className="flex min-h-0 flex-1 flex-col gap-[5px] border-t border-l border-[#555] px-[5px] pt-[5px] pb-[11px]">
      <Accordion>Container Properties</Accordion>
      <Accordion>Component Properties</Accordion>
      <Accordion open>Node Properties</Accordion>
      <div className="flex min-h-0 flex-1 flex-col border border-t-white border-r-[#555] border-b-[#555] border-l-white p-[4px]">
        <div className="flex shrink-0 flex-col gap-[5px] border border-[#555] py-[9px] pr-[10px] pl-[12px]">
          {fields.map(([label, value]) => {
            const id = label.replace(/\W/g, "");
            return (
              <div key={label} className="flex h-[23px] items-center">
                <label htmlFor={id} className="w-[144px] shrink-0">
                  {label}
                </label>
                {label === "Component Instance:" ? (
                  <div className="relative flex h-[22px] min-w-0 flex-1 items-center border-t border-l border-[#555] bg-white">
                    <select id={id} className="h-full w-full appearance-none pl-[5px]">
                      <option>{value}</option>
                    </select>
                    <span className="pointer-events-none absolute right-[2px] flex h-[17px] w-[15px] items-center justify-center border border-t-white border-r-black border-b-black border-l-white bg-[#dcdde2]">
                      <Tri dir="down" />
                    </span>
                  </div>
                ) : (
                  <input
                    id={id}
                    defaultValue={value}
                    className="h-[22px] min-w-0 flex-1 border-t border-l border-[#555] bg-white pl-[2px]"
                  />
                )}
              </div>
            );
          })}
        </div>
        <fieldset className="mt-[6px] flex min-h-0 min-w-0 flex-1 flex-col border border-[#555] px-[10px] pt-[7px] pb-[10px]">
          <legend className="-ml-[2px] px-[2px]">Port List</legend>
          <div className="flex shrink-0 items-end" role="tablist">
            <button role="tab" aria-selected="false" className="h-[20px] border border-black bg-linear-to-b from-[#555] to-[#f0f0f0] px-[7px]">
              Input Ports
            </button>
            <button role="tab" aria-selected="true" className="h-[21px] border-t border-r-2 border-b-2 border-l border-black bg-linear-to-b from-[#6f95ba] to-[#c9d3de] px-[7px] text-white">
              Output Ports
            </button>
          </div>
          <div className="relative flex min-h-0 flex-1 flex-col border border-t-white border-r-[#555] border-b-[#555] border-l-white px-[11px] pt-[12px] pb-[11px]">
            <fieldset className="flex min-h-0 min-w-0 flex-1 flex-col border border-[#555] px-[10px] pt-[5px] pb-[10px]">
              <legend className="-ml-[2px] px-[2px]">Output Ports</legend>
              <PortTable />
            </fieldset>
            <div className="absolute top-[12px] right-[17px] flex">
              <UpDown label="Move up" d="M6 0l5 6H8v3q0 3-5 3 3-2 2-6H1z" />
              <UpDown label="Move down" d="M6 12L1 7h3V4q0-3 4-4-2 2 0 7h3z" />
            </div>
          </div>
        </fieldset>
      </div>
      <div className="mt-px flex shrink-0 justify-between">
        {["Apply", "Close"].map((t) => (
          <button key={t} className="h-[24px] w-[80px] border border-t-white border-r-[#555] border-b-[#555] border-l-white bg-[#dcdde2]">
            {t}
          </button>
        ))}
      </div>
    </div>
  </aside>
);

/* ---------- desktop panel ---------- */

const Backdrop = () => (
  <svg className="absolute inset-0 h-full w-full" viewBox="0 0 1920 58" preserveAspectRatio="none">
    <defs>
      <linearGradient id="dusk" x1="0" y1="0" x2="0" y2="1">
        <stop offset="0" stopColor="#8c6474" />
        <stop offset=".6" stopColor="#a06a5c" />
        <stop offset="1" stopColor="#a8694e" />
      </linearGradient>
      <linearGradient id="steel" x1="0" y1="0" x2="0" y2="1">
        <stop offset="0" stopColor="#a3a8b8" />
        <stop offset=".6" stopColor="#b9bdcb" />
        <stop offset="1" stopColor="#d8bc58" />
      </linearGradient>
      <linearGradient id="cream" x1="0" y1="0" x2="1" y2="0">
        <stop offset="0" stopColor="#eec878" />
        <stop offset="1" stopColor="#f0e4d4" />
      </linearGradient>
      <radialGradient id="pink" cx="50%" cy="40%" r="55%">
        <stop offset="0" stopColor="#e094c4" />
        <stop offset="1" stopColor="#b05a90" />
      </radialGradient>
    </defs>
    <path d="M0 0h1920v58H0z" fill="#484845" />
    <path d="M9 0h620v51H9z" fill="url(#dusk)" />
    <path d="M9 48h550v3H9z" fill="#74404e" />
    <path d="M180 0q150 76 340 0z" fill="#74465a" />
    <path d="M205 0q125 60 290 0z" fill="#94697f" />
    <path d="M560 51q40-18 90-12v12z" fill="#efe6c8" />
    <path d="M620 0h188v51H650q-10-30-30-51z" fill="url(#steel)" />
    <path d="M625 0h30q20 24 60 0h30q-30 40-80 26-25-10-40-26z" fill="#4c6f88" />
    <path d="M752 0h20q10 30 36 45v6q-46-12-56-51z" fill="#646c78" />
    <path d="M948 0h959v51H948z" fill="#84485a" />
    <path d="M948 0h10q14 14 10 51h-20z" fill="#50748a" />
    <path d="M975 30q60-40 160 4 20 10 40 17H990z" fill="url(#pink)" />
    <path d="M960 51q70-40 180-38 60 16 70 38h-24q-60-34-120-28-50 8-60 28z" fill="#484845" />
    <path d="M1080 51q50-36 90-10l10 10z" fill="url(#pink)" />
    <path d="M1150 0h200v22q-40 20-90 14-70-6-110-36z" fill="#ecdfe9" />
    <path d="M1150 0q50 34 110 36 50 4 92-14v29h-150q-40-20-52-51z" fill="#b4639a" />
    <path d="M1180 0q60 30 150 14l20-14z" fill="#e6dae4" />
    <path d="M1200 0h122v4h-90z" fill="#8c4f70" />
    <path d="M1350 51l12-51h270l-70 6-120 22-74 23z" fill="url(#cream)" />
    <path d="M1370 51q110-50 210-12l30 12z" fill="url(#pink)" />
    <path d="M1362 51q70-36 190-46l80-3h20q-50 10-60 49h-20q-10-30-70-34-50 0-110 34z" fill="#484845" opacity=".8" />
    <path d="M1510 20q70-18 130-16-50 12-48 32-40-4-82-16z" fill="#b05f92" />
    <path d="M1400 51q70-30 130-22 30 6 40 22z" fill="url(#pink)" />
    <path d="M1650 0h257v51h-240q-40-30-17-51z" fill="#84485a" />
  </svg>
);

const Launcher = ({ label, w = "w-[58px]", children }: Kids & { label: string; w?: string }) => (
  <button aria-label={label} className={`flex h-full shrink-0 items-center justify-center ${w}`}>
    <svg width="48" height="48" viewBox="0 0 48 48">
      {children}
    </svg>
  </button>
);

const Launchers = () => (
  <div className="relative flex h-full shrink-0">
    <Launcher label="K Menu">
      <rect x="1" y="1" width="46" height="46" rx="4" fill="#3f7cc4" stroke="#0a2f7a" strokeWidth="2" />
      <path d="M2 2h44v18Q20 20 2 34z" fill="#7fb0e6" opacity=".6" />
      <path d="M17 16q-5 3-6 8M11 28q1 7 6 10M21 40q6 1 11-3" fill="none" stroke="#fff" strokeWidth="4" />
      <path d="M10 15l4-3 3 3-4 4zM5 23h6v6H5zM9 36l4-4 4 4-4 4zM20 38h6v6h-6zM32 37l4-4 4 4-4 4z" fill="#fff" />
      <path d="M21 7h6v11l8-11h7l-9 13 9 13h-8l-7-11v11h-6z" fill="#fff" />
    </Launcher>
    <Launcher label="Home">
      <path d="M9 22L24 8l15 14v22H9z" fill="#f2f0ee" stroke="#aaa" />
      <path d="M24 0l21 25-4 3L24 11 7 28l-4-3z" fill="#e8551e" stroke="#a83808" />
      <path d="M24 3l14 18-14-13-15 15z" fill="#ff9350" />
      <path d="M20 33h9v14h-9z" fill="#b5672c" />
      <path d="M18 21h11v8H18z" fill="#7a5a4c" />
      <path d="M19 22h4v5h-4zM25 22h3v5h-3z" fill="#f8c890" />
    </Launcher>
    <Launcher label="Terminal">
      <rect x="2" y="1" width="45" height="34" rx="3" fill="#f4f4f4" stroke="#999" />
      <path d="M6 5h36v25H6z" fill="#1c1c1c" />
      <path d="M6 5h36v9Q20 14 6 22z" fill="#4a4a4a" />
      <path d="M9 7l5 4-5 4M16 17h6" stroke="#cfe" strokeWidth="2" fill="none" />
      <path d="M19 35h10l2 6H17z" fill="#ddd" />
      <ellipse cx="24" cy="43" rx="15" ry="4.500" fill="#eee" stroke="#aaa" />
    </Launcher>
    <Launcher label="Konqueror">
      <path d="M5 0l14 11-9 5zM2 22l12-2v9L2 24zM41 20l-6 2 2-9zM12 34l-3 10 13-5zM45 43l-13-3 5-9zM22 38h9l-2 9h-4z" fill="#eef0f6" stroke="#8890a4" />
      <circle cx="25" cy="24" r="15.500" fill="#2f86e0" stroke="#e4ecf8" strokeWidth="2" />
      <path d="M15 16q8-8 14-4l-2 8-6 3-4 5-3-4zM27 24l8-3 2 6-7 9-5-7z" fill="#bfe2fc" />
    </Launcher>
    <Launcher label="Browser">
      <circle cx="23" cy="28" r="18" fill="#4b46b4" stroke="#25206e" />
      <path d="M12 18l20 22M10 32l26-12M18 44l12-30M9 24l24 18" stroke="#a8a8f0" fill="none" />
      <path d="M5 26Q4 8 24 6l3-5 5 1 4-2 3 4 5 5-3 5 1 6-8 1-6-4Q14 13 5 26z" fill="#fff" stroke="#99a" />
      <circle cx="33" cy="8" r="1.500" />
      <circle cx="38" cy="9" r="1.500" />
      <path d="M8 36q14 12 26 0-4 10-14 10-8-2-12-10z" fill="#e6e6f6" />
    </Launcher>
    <Launcher label="Mail">
      <path d="M4 3h40v43H4z" fill="#fff" stroke="#bbb" strokeDasharray="2 2" strokeWidth="2" />
      <path d="M7 7h34v35H7z" fill="#7c9cc4" stroke="#34507c" />
      <path d="M7 28h34v14H7z" fill="#b9cbe2" />
      <path d="M20 34q4-18 16-10v14H20z" fill="#625a94" />
      <path d="M10 42q-2-15 6-13 6 4 5 13zM22 42q16-6 14-32 6 16 2 32z" fill="#fff" />
      <path d="M13 33h1v2h-1zM17 33h1v2h-1z" />
    </Launcher>
    <Launcher label="Office">
      <circle cx="22" cy="24" r="21" fill="#cbdcf0" stroke="#8ba3c4" />
      <path d="M2 12h40M1 20h42M1 28h42M4 36h36" stroke="#fff" />
      <path d="M14 8q6 0 8 5 5-5 10-4-6 2-10 7-2-6-8-8z" fill="#3a6aa0" />
      <path d="M2 15q9 0 11 6 4-5 11-5-8 3-11 9-3-8-11-10z" fill="#222" />
      <path d="M20 20h23v27H20z" fill="#f4f2ea" stroke="#888" />
      <path d="M26 25h13M23 29h5M31 31h8M31 35h8M31 39h8M23 43h16" stroke="#999" strokeWidth="2" />
      <path d="M24 31h5v7h-5z" fill="#c87820" />
    </Launcher>
    <Launcher label="Virtual machine">
      <rect x="0" y="0" width="48" height="48" rx="5" fill="#3c556c" />
      <path d="M3 3h16l-5 4 8 8-4 4-7-7v11H3zM45 45H29l5-5-8-8 4-4 7 7V25h8z" fill="#f4b81c" stroke="#a87800" />
      <rect x="28" y="5" width="14" height="14" fill="none" stroke="#f08020" strokeWidth="5" />
      <rect x="6" y="29" width="14" height="14" fill="none" stroke="#f08020" strokeWidth="5" />
    </Launcher>
    <Launcher label="Earth">
      <circle cx="24" cy="24" r="23" fill="#1e2f8c" stroke="#101c5c" />
      <path d="M8 8Q26 6 46 26l-1 6Q30 13 4 13zM2 20q24 2 38 20l-5 4Q22 26 2 27zM4 35q12 2 22 12-16 0-22-12z" fill="#dfe6f6" />
    </Launcher>
    <Launcher label="Calculator">
      <path d="M4 7L30 1l11 38-24 8z" fill="#dcdcf0" stroke="#7c7ca4" strokeWidth="2" />
      <path d="M9 11l17-5 2 7-17 5z" fill="#30b838" stroke="#106818" />
      <circle cx="30" cy="18" r="3" fill="#e83030" />
      <g fill="#fff" stroke="#8a8ab8">
        {[0, 1, 2].map((r) => [0, 1, 2].map((c) => (
          <circle key={`${r}${c}`} cx={15 + c * 8 + r * 2} cy={25 + r * 7 - c * 2} r="3" />
        )))}
      </g>
    </Launcher>
    <Launcher label="Notes">
      <path d="M4 20L16 4l4 3 3-3 22 24-16 18-6-2-18-15z" fill="#3766cc" stroke="#101c50" strokeWidth="2" />
      <path d="M8 20l12 10 10-14M16 34l16-14" stroke="#8ab0f0" strokeWidth="3" fill="none" />
      <path d="M24 16L40 0l7 6-16 17-9 2z" fill="#f4b020" stroke="#222" />
      <path d="M4 26l20 20" stroke="#e8c030" strokeWidth="3" strokeDasharray="3 3" />
    </Launcher>
    <Launcher label="Scripts" w="w-[54px]">
      <path d="M1 7h14v34H1z" fill="#5274b4" />
      <path d="M3 10h4v6H3zM10 10v6M4 19v6M8 19h4v6H8zM3 28h4v6H3zM10 28v6M3 37h9" stroke="#c8d8f4" fill="none" strokeWidth="1.500" />
      <path d="M19 3l26 4-5 38-30-3z" fill="#fbfbf6" stroke="#888" />
      <path d="M28 14q7 0 5 8-4 5 0 9-5 5-7 0 2-3-1-6-1-8 3-11z" fill="#8c5c48" />
    </Launcher>
    <Launcher label="Software" w="w-[66px]">
      <path d="M16 7l8 6 14-10 4 14-12 9-15-7z" fill="#f4a828" stroke="#b06808" />
      <path d="M14 17l14 6 16-7v12q-8 6-16 7-10-2-14-8z" fill="#e8eefc" stroke="#6484c8" />
      <circle cx="13" cy="34" r="12" fill="#c8d8f8" stroke="#7490cc" />
      <circle cx="13" cy="34" r="3" fill="#fff" stroke="#7490cc" />
      <path d="M28 24h10v12h6L33 47 22 36h6z" fill="#a8c8fa" stroke="#5a84d0" />
    </Launcher>
  </div>
);

const Monitors = () => (
  <div className="relative flex h-full shrink-0 pl-[2px] text-[12px] text-[#ddd]">
    <svg width="48" height="58" viewBox="0 0 48 58" shapeRendering="crispEdges">
      <path d="M14 1h13v22H14z" fill="#006000" />
      <path d="M14 23h13v7H14z" fill="#ffff00" />
      <path d="M14 30h13v19H14z" fill="#0000ff" />
      <path d="M14 49h13v9H14z" fill="#ff0000" />
      <path d="M2 47h12v8H2z" fill="#0000cc" />
      <path d="M2 55h12v3H2z" fill="#006000" />
      <path d="M27 46h13v12H27z" fill="#00d0d0" />
    </svg>
    <div className="flex w-[70px] flex-col border-r border-white bg-[#2f2f2f]">
      <div className="flex h-[14px] items-center gap-[6px] border-b border-[#ddd] pl-[5px]">
        CPU
        <span className="h-[12px] w-[7px] border-r border-[#ff0] bg-[#1460b4]" />
      </div>
      <svg width="69" height="44" viewBox="0 0 69 44" shapeRendering="crispEdges">
        <path d="M0 41l5-4 4 5 4-7 5-8 3 5 4-2 3 8 2-28 3-9 2 22 3 18 3-17 2 16 3-8 4 5 5 2 3-14 3 9 4-5 3 12v4H0z" fill="#1460b4" />
        <path d="M0 41l5-4 4 5 4-7 5-8 3 5 4-2 3 8 2-28 3-9 2 22 3 18 3-17 2 16 3-8 4 5 5 2 3-14 3 9 4-5 3 12" fill="none" stroke="#ffee10" />
        <path d="M61 0v44M33 0v8" stroke="#10d020" />
        <path d="M0 23h69" stroke="#ddd" />
        <text x="5" y="21" fontSize="12" fill="#ddd">15</text>
        <text x="5" y="43" fontSize="12" fill="#ddd">0</text>
      </svg>
    </div>
    <div className="flex w-[70px] flex-col border-r border-white bg-[#2f2f2f]">
      <div className="flex h-[14px] items-center gap-[4px] border-b border-[#ddd] pl-[4px]">
        Mem
        <span className="flex h-[12px] w-[24px]">
          <i className="w-[11px] bg-[#1460b4]" />
          <i className="w-[3px] bg-[#b45014]" />
          <i className="flex-1 bg-[#a89c14]" />
        </span>
      </div>
      <svg width="69" height="44" viewBox="0 0 69 44" shapeRendering="crispEdges">
        <path d="M0 17h23v-1h4v1h42v11H0z" fill="#a89c14" />
        <path d="M0 17h23v-1h4v1h42" stroke="#ffee10" fill="none" />
        <path d="M0 27h69v3H0z" fill="#ff8010" />
        <path d="M0 29h69v15H0z" fill="#1460b4" />
        <path d="M0 23h69" stroke="#ddd" />
        <path d="M0 29h69" stroke="#b43c14" strokeWidth="2" />
      </svg>
    </div>
  </div>
);

const taskIcon: Record<string, React.ReactNode> = {
  vm: <path d="M0 0h16v16H0zM1 1v5h5M9 2h5v5H9zM2 9h5v5H2zM10 10l5 5" fill="#5a5030" stroke="#c88020" />,
  grid: <path d="M0 1h6v14H0zM9 1h6v14H9zM2 4h12M2 8h12M2 12h12" fill="#4a6a9a" stroke="#8aa4cc" />,
  disk: <path d="M1 1h14v14H1zM4 1v5h8V1" fill="#8a94a8" stroke="#c8ccd8" />,
  home: <path d="M1 1h14v10H1zM5 13h6v2H5z" fill="#5a94dc" stroke="#eef" />,
  lamp: <path d="M0 5h4l3-1h3l5-1-3 4-3 3v3h2v1H5v-1h2v-3L3 7z" fill="#c88c20" />,
  term: <path d="M1 2h13v9H1zM4 14h8" fill="#222" stroke="#ddd" strokeWidth="1.500" />,
  office: <path d="M3 2h11v13H3zM5 6h7M5 9h7M5 12h7M0 2l4 3 3-4" fill="#f4f4ee" stroke="#557" />,
  emacs: (
    <g>
      <path d="M0 0h15v16H0z" fill="#f2f2f2" stroke="#888" />
      <path d="M2 3l4 5M6 3L2 8M12 3H8v5h4M8 5h3M4 12q4 3 7-1" stroke="#e01818" strokeWidth="1.500" fill="none" />
    </g>
  ),
  pen: <path d="M1 7l7-6 7 7-6 7zM6 3l7 9" fill="#a8a498" stroke="#777" />,
  xmms: (
    <g>
      <path d="M0 0h16v16H0z" fill="#2a2622" />
      <path d="M5 13H3V7q5-8 10 0v6h-2M6 9v4M10 9v4" stroke="#e8e0d0" fill="none" />
    </g>
  ),
  feather: <path d="M0 0h15v15H0zM3 13l8-10 1 6-5 3z" fill="#8f7898" stroke="#c0b0c8" />,
  fox: <path d="M8 1a7 7 0 1 0 .1 0zM4 4q4-5 8 0l-2 3-4 2-3-1z" fill="#3838b8" stroke="#dde" />,
  pdf: <path d="M1 0h12v15H1zM3 13q6-6 4-11 0 7 6 8-6-1-10 3z" fill="#b06870" stroke="#ddc0c0" />,
};

type Task = { icons: string[]; text: string; more?: boolean; dim?: boolean; bold?: boolean };
const tasks: Task[][] = [
  [
    { icons: ["vm"], text: "/local/VMware/W2KSP4-40G", dim: true },
    { icons: ["grid", "disk"], text: "ProcessTable - Surveilla", dim: true },
    { icons: ["home"], text: "system:/home - Konqueror" },
  ],
  [
    { icons: ["lamp"], text: "SALOME 4.1.1 - [Study1]", bold: true },
    { icons: ["term"], text: "Terminal [5]", more: true },
    { icons: ["office"], text: "OpenOffice.org 2.0 [3]", more: true },
  ],
  [
    { icons: ["emacs"], text: "emacs [3]", more: true },
    { icons: ["pen"], text: "Sans nom [2]", dim: true, more: true },
    { icons: ["xmms"], text: "XMMS - 18. Paul Tortelier -" },
  ],
  [
    { icons: ["feather"], text: "Inbox for fayolle@cli20h9.", dim: true },
    { icons: ["fox"], text: "Firefox-bin [4]", more: true },
    { icons: ["pdf"], text: "GuideutilisateurMEDMEMO", dim: true },
  ],
];

const TaskList = () => (
  <div className="relative grid min-w-0 flex-1 grid-cols-4 pl-[12px]">
    {tasks.map((col, i) => (
      <div key={i} className="flex min-w-0 flex-col pt-px">
        {col.map((t) => (
          <button
            key={t.text}
            className={`flex h-[19px] items-center gap-[4px] overflow-hidden whitespace-nowrap ${
              t.bold ? "font-bold" : ""
            } ${t.dim ? "text-[#777]" : "text-black"}`}
          >
            {t.icons.map((k) => (
              <svg key={k} width="16" height="16" viewBox="0 0 16 16" className={`shrink-0 ${t.dim ? "opacity-60" : ""}`}>
                {taskIcon[k]}
              </svg>
            ))}
            <span
              className={`flex-1 overflow-hidden text-left ${
                t.dim && !t.more ? "mr-[4px] [mask-image:linear-gradient(to_right,#000_80%,transparent)]" : ""
              }`}
            >
              {t.text}
            </span>
            {t.more && (
              <span className={`mr-[9px] ${t.dim ? "opacity-40" : ""}`}>
                <Tri dir="up" />
              </span>
            )}
          </button>
        ))}
      </div>
    ))}
  </div>
);

const Tray = () => (
  <div className="relative flex h-full w-[160px] shrink-0">
    <div className="grid w-[70px] grid-cols-[24px_24px] content-center gap-y-[4px] pl-[20px]">
      <svg width="20" height="22" viewBox="0 0 20 22">
        <path d="M1 3h17v18H1z" fill="#f0a820" stroke="#a86808" />
        <path d="M4 5h11v14H4z" fill="#f4f4f4" />
        <path d="M6 1h7v4H6z" fill="#bbb" stroke="#666" />
        <path d="M7 7v10M12 9l-5 4 5 4" stroke="#666" strokeWidth="2" fill="none" />
      </svg>
      <svg width="22" height="22" viewBox="0 0 22 22">
        <circle cx="11" cy="11" r="10" fill="#4a90ee" stroke="#b8d0f8" />
        <path d="M7 6h9v10H7z" fill="#fff" />
      </svg>
      <svg width="22" height="22" viewBox="0 0 22 22">
        <path d="M0 1h20v16H0z" fill="#f4f8ff" stroke="#3a70d0" />
        <path d="M0 1h20v4H0z" fill="#3a80e8" />
        <path d="M5 5v12M10 5v12M0 9h20M0 13h20" stroke="#9ab8e8" />
        <path d="M10 18q3-2 3-7 2-3 4 0 0 5 3 7zM14 19h3v2h-3z" fill="#f0a020" stroke="#904c00" />
      </svg>
    </div>
    <time className="flex flex-1 items-center justify-center pl-[6px] font-['Liberation_Sans',sans-serif] text-[23px] font-bold text-black [text-shadow:1px_1px_0_#d8c8cc]">
      16:26
    </time>
    <button aria-label="Hide panel" className="flex w-[13px] items-center justify-center border-l border-[#bbb] bg-[#eee]">
      <Tri dir="right" />
    </button>
  </div>
);

/* ---------- window ---------- */

const menus: [string, boolean][] = [
  ["File", true], ["Edit", true], ["View", true], ["Create", false],
  ["Execute", false], ["Tools", true], ["Window", true], ["Help", true],
];

const WinBtn = ({ label, children }: Kids & { label: string }) => (
  <button aria-label={label} className="flex h-[20px] w-[20px] items-center justify-center rounded-[3px] border border-[#2c64a4] bg-[#5b9ade]">
    <svg width="12" height="12" viewBox="0 0 12 12" fill="none" stroke="#fff">
      {children}
    </svg>
  </button>
);

export default function App() {
  return (
    <div className="flex h-screen min-h-[900px] w-full flex-col overflow-hidden bg-[#3d87d2] font-['DejaVu_Sans',sans-serif] text-[13px] leading-[16px] text-[#111]">
      <div className="flex min-h-0 flex-1 flex-col border-b border-[#1c4a80]">
        <header className="flex h-[27px] shrink-0 items-center border-t border-[#20446c] bg-linear-to-b from-[#4a95e2] via-[#3b80c8] via-15% to-[#3f8edc] pr-[6px] pl-[8px]">
          <Lamp />
          <h1 className="ml-[9px] flex-1 pt-[4px] font-bold text-white [text-shadow:1px_1px_1px_#1a3a60]">
            SALOME 4.1.1 - [Study1]
          </h1>
          <div className="flex gap-[2px] pt-[2px]">
            <WinBtn label="Minimise">
              <path d="M2 10h8" strokeWidth="2" />
            </WinBtn>
            <WinBtn label="Restore">
              <path d="M4.500 4V1.500h6v6H8M1.500 4.500h6v6h-6zM1 5h7" strokeWidth="1.300" />
            </WinBtn>
            <WinBtn label="Close window">
              <path d="M2 2l8 8M10 2l-8 8" strokeWidth="2.300" />
            </WinBtn>
          </div>
        </header>
        <div className="mr-[4px] mb-[3px] ml-[4px] flex min-h-0 flex-1 flex-col bg-[#eee]">
          <nav className="flex h-[28px] shrink-0 items-center bg-linear-to-b from-white to-[#eee] pr-[2px] pl-[3px]">
            <Handle />
            <div className="flex flex-1 gap-[10px] pt-px pl-[6px]">
              {menus.map(([m, u]) => (
                <button key={m}>
                  {u ? <span className="underline underline-offset-2">{m[0]}</span> : m[0]}
                  {m.slice(1)}
                </button>
              ))}
            </div>
            <svg width="54" height="20" viewBox="0 0 54 20" aria-label="SALOME">
              <path d="M.5.5h53v19H.5z" fill="#fff" stroke="#bbb" />
              <path d="M10 8q14-2 24 6 4-6-24-6" fill="#ddd" />
              <text x="1" y="8" fontSize="9" fontWeight="bold" fill="#10689c">SALOME</text>
              <path d="M37 14h5l3-1 8-1-3 4-3 1v2h-4v-3z" fill="#c08a18" />
            </svg>
          </nav>
          <MainToolbar />
          <div className="flex min-h-0 flex-1">
            <LeftDock />
            <Workspace />
            <InputPanel />
          </div>
          <footer className="mt-[6px] mr-[5px] ml-[2px] h-[20px] shrink-0 border border-t-[#555] border-r-white border-b-white border-l-[#555]" />
        </div>
      </div>
      <div className="relative flex h-[58px] shrink-0 overflow-hidden">
        <Backdrop />
        <Launchers />
        <Monitors />
        <TaskList />
        <Tray />
      </div>
    </div>
  );
}
